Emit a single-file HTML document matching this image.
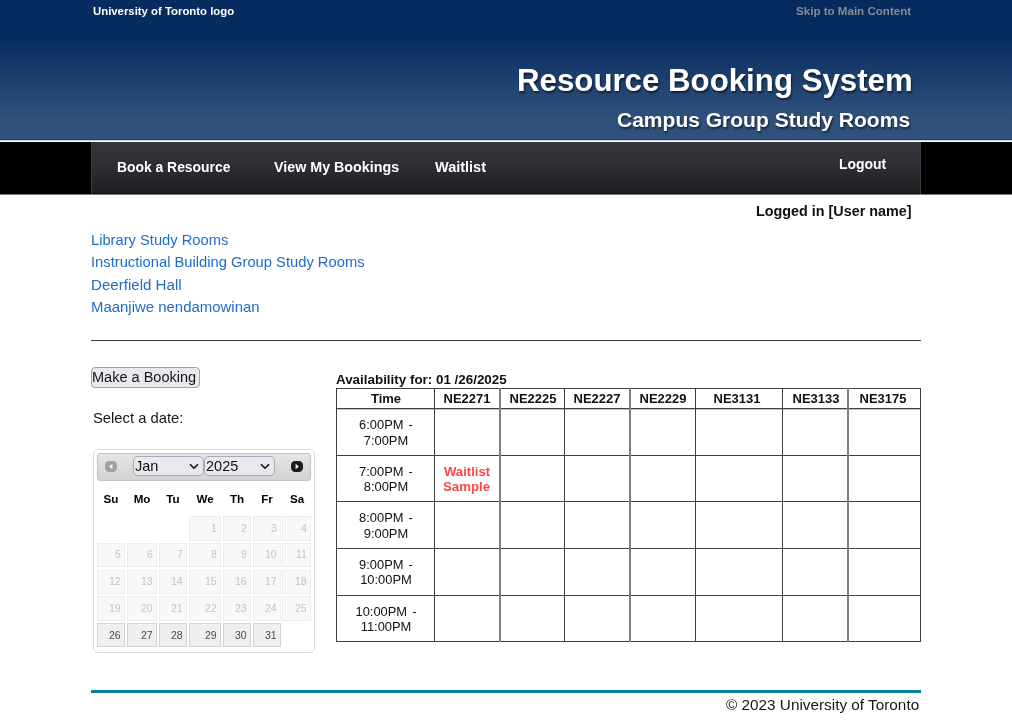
<!DOCTYPE html><html><head><meta charset="utf-8"><style>
html,body{margin:0;padding:0;}
body{width:1012px;height:720px;overflow:hidden;position:relative;background:#fff;font-family:"Liberation Sans", sans-serif;}
.t{position:absolute;white-space:nowrap;will-change:transform;}
.b{position:absolute;box-sizing:border-box;}
</style></head><body>
<div class="b" style="left:0;top:0;width:1012px;height:139px;background:linear-gradient(#062b5f 0px,#062b5f 35px,#30517b 118px,#30517b 139px);"></div>
<div class="b" style="left:0;top:139px;width:1012px;height:1px;background:#1f3e6a;"></div>
<div class="b" style="left:0;top:140px;width:1012px;height:1px;background:#c9d2de;"></div>
<div class="b" style="left:0;top:141px;width:1012px;height:1px;background:#fff;"></div>
<div class="b" style="left:0;top:142px;width:1012px;height:52px;background:#000;"></div>
<div class="b" style="left:0;top:194px;width:1012px;height:1px;background:#7a7a7a;"></div>
<div class="b" style="left:91px;top:142px;width:830px;height:52px;background:linear-gradient(#34333b 0%,#303037 35%,#1f1f21 95%,#161617 100%);border-left:1px solid #3a3a3e;border-right:1px solid #3a3a3e;"></div>
<div class="b" style="left:91px;top:340px;width:830px;height:1px;background:#3c3c3c;"></div>
<div class="b" style="left:91px;top:367px;width:109px;height:21px;background:#e9e9ed;border:1px solid #9f9fa6;border-radius:4px;"></div>
<div class="t" style="left:93.34px;top:4.54px;font-size:11.36px;line-height:13.64px;font-weight:bold;color:#fff;">University of Toronto logo</div>
<div class="t" style="left:796.32px;top:5.24px;font-size:11.59px;line-height:13.9px;font-weight:bold;color:#868b95;">Skip to Main Content</div>
<div class="t" style="left:516.96px;top:62.43px;font-size:31.24px;line-height:37.49px;font-weight:bold;color:#fff;text-shadow:1px 2px 2px rgba(0,0,0,0.55);">Resource Booking System</div>
<div class="t" style="left:617.32px;top:107.19px;font-size:21.03px;line-height:25.24px;font-weight:bold;color:#fff;text-shadow:1px 2px 2px rgba(0,0,0,0.55);">Campus Group Study Rooms</div>
<div class="t" style="left:117.32px;top:158.56px;font-size:13.88px;line-height:16.66px;font-weight:bold;color:#fff;">Book a Resource</div>
<div class="t" style="left:274.49px;top:159.17px;font-size:14.29px;line-height:17.15px;font-weight:bold;color:#fff;">View My Bookings</div>
<div class="t" style="left:435.00px;top:158.98px;font-size:14.49px;line-height:17.39px;font-weight:bold;color:#fff;">Waitlist</div>
<div class="t" style="left:838.66px;top:155.81px;font-size:13.94px;line-height:16.72px;font-weight:bold;color:#fff;">Logout</div>
<div class="t" style="left:756.00px;top:203.21px;font-size:14.36px;line-height:17.23px;font-weight:bold;color:#111;">Logged in [User name]</div>
<div class="t" style="left:91.47px;top:231.68px;font-size:14.71px;line-height:17.65px;font-weight:normal;color:#1f6dc9;">Library Study Rooms</div>
<div class="t" style="left:91.47px;top:254.05px;font-size:14.74px;line-height:17.69px;font-weight:normal;color:#1f6dc9;">Instructional Building Group Study Rooms</div>
<div class="t" style="left:91.47px;top:276.00px;font-size:15.10px;line-height:18.13px;font-weight:normal;color:#1f6dc9;">Deerfield Hall</div>
<div class="t" style="left:91.47px;top:298.46px;font-size:14.94px;line-height:17.93px;font-weight:normal;color:#1f6dc9;">Maanjiwe nendamowinan</div>
<div class="t" style="left:92.28px;top:369.25px;font-size:14.53px;line-height:17.44px;font-weight:normal;color:#161616;">Make a Booking</div>
<div class="t" style="left:93.15px;top:409.91px;font-size:14.78px;line-height:17.73px;font-weight:normal;color:#161616;">Select a date:</div>
<div class="t" style="left:336.32px;top:372.12px;font-size:13.40px;line-height:16.08px;font-weight:bold;color:#111;">Availability for: 01 /26/2025</div>
<div class="t" style="left:726.49px;top:696.20px;font-size:15.32px;line-height:18.39px;font-weight:normal;color:#161616;">© 2023 University of Toronto</div>
<div class="t" style="left:444.19px;top:464.40px;font-size:13.10px;line-height:15.72px;font-weight:bold;color:#fd4646;">Waitlist</div>
<div class="t" style="left:443.49px;top:479.48px;font-size:13.23px;line-height:15.87px;font-weight:bold;color:#fd4646;">Sample</div>
<div class="b" style="left:93px;top:449px;width:222px;height:204px;border:1px solid #dedede;border-radius:5px;background:#fff;"></div>
<div class="b" style="left:97px;top:453px;width:214px;height:28px;border:1px solid #c2c2c2;border-radius:3px;background:linear-gradient(#e6e6e6,#d2d2d2);"></div>
<svg style="position:absolute;left:105px;top:461px" width="12" height="11" viewBox="0 0 12 11"><rect x="0" y="0" width="12" height="11" rx="4.2" fill="#a0a0a0"/><path d="M4.2 5.5 L7.4 2.8 L7.4 8.2 Z" fill="#fff"/></svg>
<svg style="position:absolute;left:291px;top:461px" width="12" height="11" viewBox="0 0 12 11"><rect x="0" y="0" width="12" height="11" rx="4.2" fill="#1c1c1c"/><path d="M7.8 5.5 L4.6 2.8 L4.6 8.2 Z" fill="#fff"/></svg>
<div class="b" style="left:133px;top:456px;width:70.5px;height:20px;border:1px solid #a9a9b1;border-radius:5px;background:#e9e8ee;"></div>
<div class="t" style="left:135.2px;top:458.28px;font-size:14.5px;line-height:17.4px;font-weight:normal;color:#111;">Jan</div>
<svg style="position:absolute;left:189.3px;top:463px" width="10" height="7" viewBox="0 0 10 7"><path d="M1 1.2 L5 5.2 L9 1.2" fill="none" stroke="#111" stroke-width="1.6"/></svg>
<div class="b" style="left:203.5px;top:456px;width:71.5px;height:20px;border:1px solid #a9a9b1;border-radius:5px;background:#e9e8ee;"></div>
<div class="t" style="left:205.7px;top:458.28px;font-size:14.5px;line-height:17.4px;font-weight:normal;color:#111;">2025</div>
<svg style="position:absolute;left:260.2px;top:463px" width="10" height="7" viewBox="0 0 10 7"><path d="M1 1.2 L5 5.2 L9 1.2" fill="none" stroke="#111" stroke-width="1.6"/></svg>
<div class="t" style="left:-189.0px;width:600px;text-align:center;top:492.12px;font-size:11.6px;line-height:13.92px;font-weight:bold;color:#000;">Su</div>
<div class="t" style="left:-158.125px;width:600px;text-align:center;top:492.12px;font-size:11.6px;line-height:13.92px;font-weight:bold;color:#000;">Mo</div>
<div class="t" style="left:-127.0px;width:600px;text-align:center;top:492.12px;font-size:11.6px;line-height:13.92px;font-weight:bold;color:#000;">Tu</div>
<div class="t" style="left:-94.975px;width:600px;text-align:center;top:492.12px;font-size:11.6px;line-height:13.92px;font-weight:bold;color:#000;">We</div>
<div class="t" style="left:-63.14999999999998px;width:600px;text-align:center;top:492.12px;font-size:11.6px;line-height:13.92px;font-weight:bold;color:#000;">Th</div>
<div class="t" style="left:-33.35000000000002px;width:600px;text-align:center;top:492.12px;font-size:11.6px;line-height:13.92px;font-weight:bold;color:#000;">Fr</div>
<div class="t" style="left:-3.3500000000000227px;width:600px;text-align:center;top:492.12px;font-size:11.6px;line-height:13.92px;font-weight:bold;color:#000;">Sa</div>
<div class="b" style="left:189.25px;top:516.2px;width:31.55px;height:24.40px;background:#f8f8f8;border:1px solid #ededed;"></div>
<div class="t" style="right:795.5px;text-align:right;top:521.56px;font-size:10.5px;line-height:12.6px;font-weight:normal;color:#c4c4c4;">1</div>
<div class="b" style="left:222.8px;top:516.2px;width:28.10px;height:24.40px;background:#f8f8f8;border:1px solid #ededed;"></div>
<div class="t" style="right:765.4px;text-align:right;top:521.56px;font-size:10.5px;line-height:12.6px;font-weight:normal;color:#c4c4c4;">2</div>
<div class="b" style="left:252.6px;top:516.2px;width:28.10px;height:24.40px;background:#f8f8f8;border:1px solid #ededed;"></div>
<div class="t" style="right:735.6px;text-align:right;top:521.56px;font-size:10.5px;line-height:12.6px;font-weight:normal;color:#c4c4c4;">3</div>
<div class="b" style="left:282.4px;top:516.2px;width:28.50px;height:24.40px;background:#f8f8f8;border:1px solid #ededed;"></div>
<div class="t" style="right:705.4000000000001px;text-align:right;top:521.56px;font-size:10.5px;line-height:12.6px;font-weight:normal;color:#c4c4c4;">4</div>
<div class="b" style="left:97px;top:543px;width:28.00px;height:24.20px;background:#f8f8f8;border:1px solid #ededed;"></div>
<div class="t" style="right:891.3px;text-align:right;top:548.36px;font-size:10.5px;line-height:12.6px;font-weight:normal;color:#c4c4c4;">5</div>
<div class="b" style="left:127px;top:543px;width:29.75px;height:24.20px;background:#f8f8f8;border:1px solid #ededed;"></div>
<div class="t" style="right:859.55px;text-align:right;top:548.36px;font-size:10.5px;line-height:12.6px;font-weight:normal;color:#c4c4c4;">6</div>
<div class="b" style="left:159px;top:543px;width:28.00px;height:24.20px;background:#f8f8f8;border:1px solid #ededed;"></div>
<div class="t" style="right:829.3px;text-align:right;top:548.36px;font-size:10.5px;line-height:12.6px;font-weight:normal;color:#c4c4c4;">7</div>
<div class="b" style="left:189.25px;top:543px;width:31.55px;height:24.20px;background:#f8f8f8;border:1px solid #ededed;"></div>
<div class="t" style="right:795.5px;text-align:right;top:548.36px;font-size:10.5px;line-height:12.6px;font-weight:normal;color:#c4c4c4;">8</div>
<div class="b" style="left:222.8px;top:543px;width:28.10px;height:24.20px;background:#f8f8f8;border:1px solid #ededed;"></div>
<div class="t" style="right:765.4px;text-align:right;top:548.36px;font-size:10.5px;line-height:12.6px;font-weight:normal;color:#c4c4c4;">9</div>
<div class="b" style="left:252.6px;top:543px;width:28.10px;height:24.20px;background:#f8f8f8;border:1px solid #ededed;"></div>
<div class="t" style="right:735.6px;text-align:right;top:548.36px;font-size:10.5px;line-height:12.6px;font-weight:normal;color:#c4c4c4;">10</div>
<div class="b" style="left:282.4px;top:543px;width:28.50px;height:24.20px;background:#f8f8f8;border:1px solid #ededed;"></div>
<div class="t" style="right:705.4000000000001px;text-align:right;top:548.36px;font-size:10.5px;line-height:12.6px;font-weight:normal;color:#c4c4c4;">11</div>
<div class="b" style="left:97px;top:569.5px;width:28.00px;height:24.25px;background:#f8f8f8;border:1px solid #ededed;"></div>
<div class="t" style="right:891.3px;text-align:right;top:574.86px;font-size:10.5px;line-height:12.6px;font-weight:normal;color:#c4c4c4;">12</div>
<div class="b" style="left:127px;top:569.5px;width:29.75px;height:24.25px;background:#f8f8f8;border:1px solid #ededed;"></div>
<div class="t" style="right:859.55px;text-align:right;top:574.86px;font-size:10.5px;line-height:12.6px;font-weight:normal;color:#c4c4c4;">13</div>
<div class="b" style="left:159px;top:569.5px;width:28.00px;height:24.25px;background:#f8f8f8;border:1px solid #ededed;"></div>
<div class="t" style="right:829.3px;text-align:right;top:574.86px;font-size:10.5px;line-height:12.6px;font-weight:normal;color:#c4c4c4;">14</div>
<div class="b" style="left:189.25px;top:569.5px;width:31.55px;height:24.25px;background:#f8f8f8;border:1px solid #ededed;"></div>
<div class="t" style="right:795.5px;text-align:right;top:574.86px;font-size:10.5px;line-height:12.6px;font-weight:normal;color:#c4c4c4;">15</div>
<div class="b" style="left:222.8px;top:569.5px;width:28.10px;height:24.25px;background:#f8f8f8;border:1px solid #ededed;"></div>
<div class="t" style="right:765.4px;text-align:right;top:574.86px;font-size:10.5px;line-height:12.6px;font-weight:normal;color:#c4c4c4;">16</div>
<div class="b" style="left:252.6px;top:569.5px;width:28.10px;height:24.25px;background:#f8f8f8;border:1px solid #ededed;"></div>
<div class="t" style="right:735.6px;text-align:right;top:574.86px;font-size:10.5px;line-height:12.6px;font-weight:normal;color:#c4c4c4;">17</div>
<div class="b" style="left:282.4px;top:569.5px;width:28.50px;height:24.25px;background:#f8f8f8;border:1px solid #ededed;"></div>
<div class="t" style="right:705.4000000000001px;text-align:right;top:574.86px;font-size:10.5px;line-height:12.6px;font-weight:normal;color:#c4c4c4;">18</div>
<div class="b" style="left:97px;top:596.25px;width:28.00px;height:24.25px;background:#f8f8f8;border:1px solid #ededed;"></div>
<div class="t" style="right:891.3px;text-align:right;top:601.61px;font-size:10.5px;line-height:12.6px;font-weight:normal;color:#c4c4c4;">19</div>
<div class="b" style="left:127px;top:596.25px;width:29.75px;height:24.25px;background:#f8f8f8;border:1px solid #ededed;"></div>
<div class="t" style="right:859.55px;text-align:right;top:601.61px;font-size:10.5px;line-height:12.6px;font-weight:normal;color:#c4c4c4;">20</div>
<div class="b" style="left:159px;top:596.25px;width:28.00px;height:24.25px;background:#f8f8f8;border:1px solid #ededed;"></div>
<div class="t" style="right:829.3px;text-align:right;top:601.61px;font-size:10.5px;line-height:12.6px;font-weight:normal;color:#c4c4c4;">21</div>
<div class="b" style="left:189.25px;top:596.25px;width:31.55px;height:24.25px;background:#f8f8f8;border:1px solid #ededed;"></div>
<div class="t" style="right:795.5px;text-align:right;top:601.61px;font-size:10.5px;line-height:12.6px;font-weight:normal;color:#c4c4c4;">22</div>
<div class="b" style="left:222.8px;top:596.25px;width:28.10px;height:24.25px;background:#f8f8f8;border:1px solid #ededed;"></div>
<div class="t" style="right:765.4px;text-align:right;top:601.61px;font-size:10.5px;line-height:12.6px;font-weight:normal;color:#c4c4c4;">23</div>
<div class="b" style="left:252.6px;top:596.25px;width:28.10px;height:24.25px;background:#f8f8f8;border:1px solid #ededed;"></div>
<div class="t" style="right:735.6px;text-align:right;top:601.61px;font-size:10.5px;line-height:12.6px;font-weight:normal;color:#c4c4c4;">24</div>
<div class="b" style="left:282.4px;top:596.25px;width:28.50px;height:24.25px;background:#f8f8f8;border:1px solid #ededed;"></div>
<div class="t" style="right:705.4000000000001px;text-align:right;top:601.61px;font-size:10.5px;line-height:12.6px;font-weight:normal;color:#c4c4c4;">25</div>
<div class="b" style="left:97px;top:623.2px;width:28.00px;height:24.30px;background:#efefef;border:1px solid #d3d3d3;"></div>
<div class="t" style="right:891.3px;text-align:right;top:628.56px;font-size:10.5px;line-height:12.6px;font-weight:normal;color:#484848;">26</div>
<div class="b" style="left:127px;top:623.2px;width:29.75px;height:24.30px;background:#efefef;border:1px solid #d3d3d3;"></div>
<div class="t" style="right:859.55px;text-align:right;top:628.56px;font-size:10.5px;line-height:12.6px;font-weight:normal;color:#484848;">27</div>
<div class="b" style="left:159px;top:623.2px;width:28.00px;height:24.30px;background:#efefef;border:1px solid #d3d3d3;"></div>
<div class="t" style="right:829.3px;text-align:right;top:628.56px;font-size:10.5px;line-height:12.6px;font-weight:normal;color:#484848;">28</div>
<div class="b" style="left:189.25px;top:623.2px;width:31.55px;height:24.30px;background:#efefef;border:1px solid #d3d3d3;"></div>
<div class="t" style="right:795.5px;text-align:right;top:628.56px;font-size:10.5px;line-height:12.6px;font-weight:normal;color:#484848;">29</div>
<div class="b" style="left:222.8px;top:623.2px;width:28.10px;height:24.30px;background:#efefef;border:1px solid #d3d3d3;"></div>
<div class="t" style="right:765.4px;text-align:right;top:628.56px;font-size:10.5px;line-height:12.6px;font-weight:normal;color:#484848;">30</div>
<div class="b" style="left:252.6px;top:623.2px;width:28.10px;height:24.30px;background:#efefef;border:1px solid #d3d3d3;"></div>
<div class="t" style="right:735.6px;text-align:right;top:628.56px;font-size:10.5px;line-height:12.6px;font-weight:normal;color:#484848;">31</div>
<div class="b" style="left:336px;top:388px;width:585px;height:1px;background:#3f3f3f;"></div>
<div class="b" style="left:336px;top:455px;width:585px;height:1px;background:#3f3f3f;"></div>
<div class="b" style="left:336px;top:501px;width:585px;height:1px;background:#3f3f3f;"></div>
<div class="b" style="left:336px;top:548px;width:585px;height:1px;background:#3f3f3f;"></div>
<div class="b" style="left:336px;top:595px;width:585px;height:1px;background:#3f3f3f;"></div>
<div class="b" style="left:336px;top:641px;width:585px;height:1px;background:#3f3f3f;"></div>
<div class="b" style="left:336px;top:408px;width:585px;height:1px;background:#3f3f3f;"></div>
<div class="b" style="left:336px;top:409px;width:585px;height:1px;background:#c4c4c4;"></div>
<div class="b" style="left:336px;top:388px;width:1px;height:254px;background:#3f3f3f;"></div>
<div class="b" style="left:434px;top:388px;width:1px;height:254px;background:#3f3f3f;"></div>
<div class="b" style="left:564px;top:388px;width:1px;height:254px;background:#3f3f3f;"></div>
<div class="b" style="left:695px;top:388px;width:1px;height:254px;background:#3f3f3f;"></div>
<div class="b" style="left:782px;top:388px;width:1px;height:254px;background:#3f3f3f;"></div>
<div class="b" style="left:920px;top:388px;width:1px;height:254px;background:#3f3f3f;"></div>
<div class="b" style="left:499px;top:388px;width:2px;height:254px;background:#808080;"></div>
<div class="b" style="left:629px;top:388px;width:2px;height:254px;background:#808080;"></div>
<div class="b" style="left:847px;top:388px;width:2px;height:254px;background:#808080;"></div>
<div class="t" style="left:85.69999999999999px;width:600px;text-align:center;top:391.20px;font-size:13px;line-height:15.6px;font-weight:bold;color:#111;">Time</div>
<div class="t" style="left:166.60000000000002px;width:600px;text-align:center;top:391.20px;font-size:13px;line-height:15.6px;font-weight:bold;color:#111;">NE2271</div>
<div class="t" style="left:233.1500000000001px;width:600px;text-align:center;top:391.20px;font-size:13px;line-height:15.6px;font-weight:bold;color:#111;">NE2225</div>
<div class="t" style="left:296.95000000000005px;width:600px;text-align:center;top:391.20px;font-size:13px;line-height:15.6px;font-weight:bold;color:#111;">NE2227</div>
<div class="t" style="left:362.75px;width:600px;text-align:center;top:391.20px;font-size:13px;line-height:15.6px;font-weight:bold;color:#111;">NE2229</div>
<div class="t" style="left:437.25px;width:600px;text-align:center;top:391.20px;font-size:13px;line-height:15.6px;font-weight:bold;color:#111;">NE3131</div>
<div class="t" style="left:516.2px;width:600px;text-align:center;top:391.20px;font-size:13px;line-height:15.6px;font-weight:bold;color:#111;">NE3133</div>
<div class="t" style="left:583.0px;width:600px;text-align:center;top:391.20px;font-size:13px;line-height:15.6px;font-weight:bold;color:#111;">NE3175</div>
<div class="t" style="left:85.69999999999999px;width:600px;text-align:center;top:417.19px;font-size:12.9px;line-height:15.48px;font-weight:normal;color:#111;word-spacing:1.5px;">6:00PM -</div>
<div class="t" style="left:85.69999999999999px;width:600px;text-align:center;top:432.69px;font-size:12.9px;line-height:15.48px;font-weight:normal;color:#111;">7:00PM</div>
<div class="t" style="left:85.69999999999999px;width:600px;text-align:center;top:463.79px;font-size:12.9px;line-height:15.48px;font-weight:normal;color:#111;word-spacing:1.5px;">7:00PM -</div>
<div class="t" style="left:85.69999999999999px;width:600px;text-align:center;top:479.29px;font-size:12.9px;line-height:15.48px;font-weight:normal;color:#111;">8:00PM</div>
<div class="t" style="left:85.69999999999999px;width:600px;text-align:center;top:510.39px;font-size:12.9px;line-height:15.48px;font-weight:normal;color:#111;word-spacing:1.5px;">8:00PM -</div>
<div class="t" style="left:85.69999999999999px;width:600px;text-align:center;top:525.89px;font-size:12.9px;line-height:15.48px;font-weight:normal;color:#111;">9:00PM</div>
<div class="t" style="left:85.69999999999999px;width:600px;text-align:center;top:556.99px;font-size:12.9px;line-height:15.48px;font-weight:normal;color:#111;word-spacing:1.5px;">9:00PM -</div>
<div class="t" style="left:85.69999999999999px;width:600px;text-align:center;top:572.49px;font-size:12.9px;line-height:15.48px;font-weight:normal;color:#111;">10:00PM</div>
<div class="t" style="left:85.69999999999999px;width:600px;text-align:center;top:603.59px;font-size:12.9px;line-height:15.48px;font-weight:normal;color:#111;word-spacing:1.5px;">10:00PM -</div>
<div class="t" style="left:85.69999999999999px;width:600px;text-align:center;top:619.09px;font-size:12.9px;line-height:15.48px;font-weight:normal;color:#111;">11:00PM</div>
<div class="b" style="left:91px;top:690px;width:830px;height:3px;background:#0a7fa6;"></div>
</body></html>
